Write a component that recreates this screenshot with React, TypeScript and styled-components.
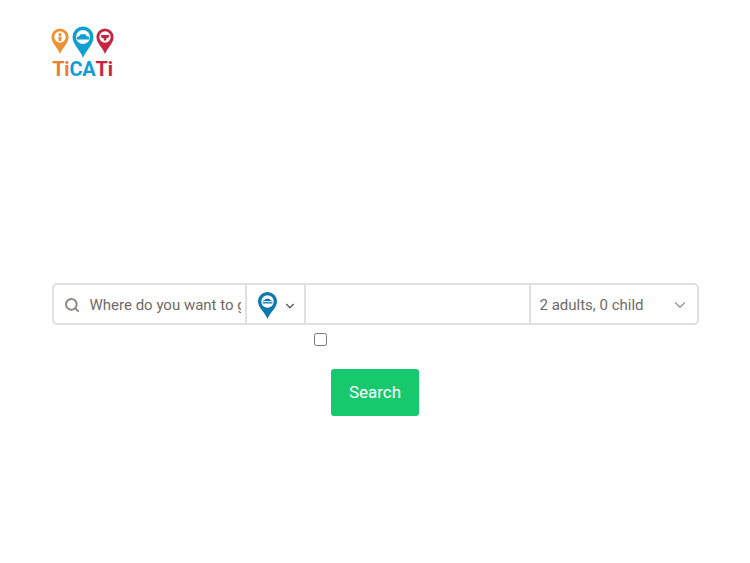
import React from 'react';
import styled, { createGlobalStyle } from 'styled-components';
import { Search as SearchIcon, ChevronDown } from 'lucide-react';

const GlobalStyle = createGlobalStyle`
  * {
    box-sizing: border-box;
  }
  body {
    margin: 0;
    background: #ffffff;
    font-family: Roboto, "Liberation Sans", sans-serif;
  }
`;

const Pin = ({ color, width, glyph }: { color: string; width: number; glyph: 'person' | 'car' | 'heart' }) => (
  <svg width={width} height={width * 1.45} viewBox="0 0 22 32">
    <path d="M11 32C8.500 24 0.500 19 0.500 11a10.500 10.500 0 0 1 21 0c0 8-7.500 13-10.500 21z" fill={color} />
    <circle cx="11" cy="11" r="7" fill="#ffffff" />
    {glyph === 'person' && (
      <path d="M11 6.200a2 2 0 1 1 0 4 2 2 0 0 1 0-4zM8.800 10.800h4.400l-.8 5h-2.800z" fill={color} />
    )}
    {glyph === 'car' && (
      <path d="M5 13.500v-2.700l2.200-.6 1.400-2h4.800l1.400 2 2.200.6v2.700z" fill={color} />
    )}
    {glyph === 'heart' && (
      <path d="M5.800 8.500h10.400l-1 3.500-2.700 1v2.200h-3V13l-2.700-1z" fill={color} />
    )}
  </svg>
);

const TransportPin = () => (
  <svg width="19" height="27" viewBox="0 0 19 27">
    <path d="M9.500 27C7.200 20.500 0 16 0 9.500a9.500 9.500 0 0 1 19 0C19 16 11.800 20.500 9.500 27z" fill="#0b79ad" />
    <circle cx="9.500" cy="9.500" r="6.200" fill="#ffffff" />
    <path d="M4.700 11.500V8.800l1.700-.5 1.300-1.500h3.600l1.400 1.500 1.600.5v2.700z" fill="#0b79ad" />
    <rect x="4.700" y="9.200" width="9.600" height="1" fill="#ffffff" />
  </svg>
);

const App = () => {
  return (
    <Page>
      <GlobalStyle />
      <Logo>
        <Pins>
          <Pin color="#ec9233" width={18} glyph="person" />
          <Pin color="#0f9fd2" width={22} glyph="car" />
          <Pin color="#c8243f" width={18} glyph="heart" />
        </Pins>
        <Wordmark>
          <Letter $color="#e5812b">T</Letter>
          <Letter $color="#e5812b">i</Letter>
          <Letter $color="#0f9fd2">C</Letter>
          <Letter $color="#0f9fd2">A</Letter>
          <Letter $color="#c8243f">T</Letter>
          <Letter $color="#c8243f">i</Letter>
        </Wordmark>
      </Logo>

      <SearchForm>
        <SearchBar>
          <PlaceCell>
            <SearchIcon size={16} strokeWidth={3} color="#8f8a85" />
            <PlaceInput placeholder="Where do you want to go?" />
          </PlaceCell>
          <TransportCell>
            <TransportPin />
            <ChevronDown size={14} strokeWidth={2} color="#555555" />
          </TransportCell>
          <DateCell />
          <GuestCell>
            <span>2 adults, 0 child</span>
            <ChevronDown size={18} strokeWidth={1.5} color="#8f8f8f" />
          </GuestCell>
        </SearchBar>
        <CheckRow>
          <Check type="checkbox" />
        </CheckRow>
        <SearchButton type="button">Search</SearchButton>
      </SearchForm>
    </Page>
  );
};

const Page = styled.div`
  width: 750px;
  height: 563px;
  padding: 26px 52px 0 51px;
  overflow: hidden;
`;

const Logo = styled.div`
  width: 63px;
  display: flex;
  flex-direction: column;
  align-items: center;
`;

const Pins = styled.div`
  display: flex;
  align-items: flex-start;
  gap: 2.500px;
  height: 33px;

  svg:first-child,
  svg:last-child {
    margin-top: 2px;
  }
`;

const Wordmark = styled.div`
  display: flex;
  font-family: Roboto, sans-serif;
  font-size: 20px;
  font-weight: 700;
  line-height: 21px;
  letter-spacing: -0.2px;
`;

const Letter = styled.span<{ $color: string }>`
  color: ${(p) => p.$color};
`;

const SearchForm = styled.div`
  margin-top: 203px;
  margin-left: 1px;
  display: flex;
  flex-direction: column;
  align-items: center;
`;

const SearchBar = styled.div`
  width: 647px;
  height: 42px;
  display: flex;
  border: 2px solid #e0e0e0;
  border-radius: 5px;
  background: #ffffff;
`;

const PlaceCell = styled.div`
  width: 193px;
  display: flex;
  align-items: center;
  gap: 10px;
  padding: 2px 4px 0 10px;
  border-right: 2px solid #e0e0e0;
`;

const PlaceInput = styled.input`
  flex: 1;
  min-width: 0;
  border: 0;
  outline: 0;
  padding: 0;
  font: 400 15px Roboto, sans-serif;
  color: #6f6a66;

  &::placeholder {
    color: #6f6a66;
    opacity: 1;
  }
`;

const TransportCell = styled.div`
  width: 59px;
  display: flex;
  align-items: center;
  gap: 6px;
  padding: 2px 0 0 11px;
  border-right: 2px solid #e0e0e0;

  svg:last-child {
    margin-top: 1px;
  }
`;

const DateCell = styled.div`
  width: 225px;
  border-right: 2px solid #e0e0e0;
`;

const GuestCell = styled.div`
  flex: 1;
  display: flex;
  align-items: center;
  justify-content: space-between;
  padding: 2px 8px 0 9px;
  font-size: 15px;
  color: #6f6a66;
`;

const CheckRow = styled.div`
  width: 100%;
  height: 28px;
  padding-left: 262px;
  padding-top: 8px;
`;

const Check = styled.input`
  display: block;
  width: 13px;
  height: 13px;
  margin: 0;
`;

const SearchButton = styled.button`
  width: 88px;
  height: 47px;
  margin-top: 16px;
  padding: 0 0 2px;
  border: 0;
  border-radius: 3px;
  background: #17c96d;
  color: #ffffff;
  font: 400 17px Roboto, sans-serif;
`;

export default App;
